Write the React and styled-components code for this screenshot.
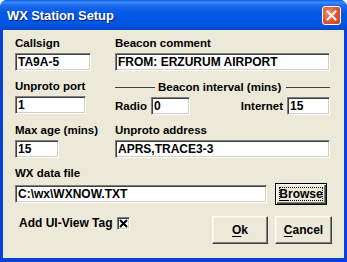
import React from "react";
import styled, { createGlobalStyle } from "styled-components";

const Global = createGlobalStyle`
    html, body {
        margin: 0;
        padding: 0;
        background: #ffffff;
    }
    body {
        font-family: "Liberation Sans", Arial, sans-serif;
    }
`;

const Window = styled.div`
    width: 347px;
    height: 262px;
    display: flex;
    flex-direction: column;
    box-sizing: border-box;
    background: #0842d6;
    border-radius: 7px 7px 0 0;
    overflow: hidden;
`;

const TitleBar = styled.div`
    height: 30px;
    flex: none;
    display: flex;
    align-items: center;
    justify-content: space-between;
    padding: 0 6px 0 7px;
    background: linear-gradient(
        to bottom,
        #0a5fe8 0%,
        #3d8cf5 8%,
        #1c69ee 18%,
        #0258e3 45%,
        #0056e4 75%,
        #0250da 90%,
        #0a46c4 100%
    );
`;

const Title = styled.span`
    color: #ffffff;
    font-weight: bold;
    font-size: 13px;
    text-shadow: 1px 1px #0a1f6c;
    letter-spacing: -0.1px;
`;

const CloseButton = styled.div`
    width: 19px;
    height: 19px;
    box-sizing: border-box;
    border: 1px solid #ffffff;
    border-radius: 3px;
    background: radial-gradient(circle at 35% 35%, #f08f6c 0%, #e0582f 50%, #c8401a 100%);
    display: flex;
    align-items: center;
    justify-content: center;
    margin-top: 1px;
`;

const Client = styled.div`
    flex: 1;
    min-height: 0;
    margin: 0 3px 4px 3px;
    background: #ece9d8;
    display: flex;
    flex-direction: column;
    padding: 7px 14px 0 12px;
    gap: 9px;
    font-size: 11.5px;
    font-weight: bold;
    color: #000000;
`;

const Row = styled.div`
    display: flex;
    gap: ${({ $gap }) => $gap ?? 24}px;
    align-items: ${({ $align }) => $align ?? "flex-start"};
    padding-right: ${({ $pr }) => $pr ?? 0}px;
    margin-top: ${({ $mt }) => $mt ?? 0}px;
`;

const Field = styled.div`
    display: flex;
    flex-direction: column;
    gap: 3px;
    width: ${({ $w }) => ($w ? `${$w}px` : "auto")};
    flex: ${({ $w }) => ($w ? "none" : 1)};
`;

const FileField = styled.div`
    display: flex;
    flex-direction: column;
    gap: 3px;
`;

const Label = styled.label`
    line-height: 13px;
    white-space: nowrap;
`;

const Input = styled.div`
    height: 18px;
    box-sizing: border-box;
    width: ${({ $w }) => ($w ? `${$w}px` : "auto")};
    flex: ${({ $grow }) => ($grow ? 1 : "none")};
    background: #ffffff;
    border: 1px solid;
    border-color: #808080 #ffffff #ffffff #808080;
    box-shadow: inset 1px 1px #404040, inset -1px -1px #d4d0c8;
    font-size: 12px;
    line-height: 16px;
    padding: 0 0 0 2px;
    white-space: nowrap;
    overflow: hidden;
`;

const Group = styled.div`
    flex: 1;
    display: flex;
    flex-direction: column;
    gap: 3px;
    padding-top: 1px;
`;

const Legend = styled.div`
    display: flex;
    align-items: center;
    gap: 3px;
    line-height: 13px;

    &::before,
    &::after {
        content: "";
        height: 0;
        border-top: 1px solid #404040;
    }
    &::before {
        width: 40px;
    }
    &::after {
        flex: 1;
        margin-left: 2px;
    }
`;

const Inline = styled.div`
    display: flex;
    align-items: center;
    gap: 4px;
`;

const Spacer = styled.div`
    flex: 1;
`;

const Button = styled.button`
    font-family: inherit;
    font-size: 12px;
    font-weight: bold;
    color: #000000;
    width: ${({ $w }) => $w}px;
    height: ${({ $h }) => $h}px;
    box-sizing: border-box;
    background: #ece9d8;
    border: 1px solid;
    border-color: #ffffff #404040 #404040 #ffffff;
    box-shadow: inset -1px -1px #808080, inset 1px 1px #f4f2e8;
    padding: 0;
    position: relative;

    u {
        text-decoration: underline;
        text-underline-offset: 2px;
    }
`;

const DefaultButton = styled(Button)`
    border: 1px solid #000000;
    box-shadow: inset 1px 1px #ffffff, inset -1px -1px #404040, inset -2px -2px #808080;

    &::after {
        content: "";
        position: absolute;
        inset: 3px;
        border: 1px dotted #000000;
    }
`;

const CheckRow = styled.div`
    display: flex;
    align-items: center;
    gap: 4px;
    padding-left: 4px;
    margin-top: 1px;
    font-size: 12px;
    line-height: 13px;
`;

const CheckBox = styled.div`
    width: 13px;
    height: 13px;
    box-sizing: border-box;
    background: #ffffff;
    border: 1px solid;
    border-color: #808080 #ffffff #ffffff #808080;
    box-shadow: inset 1px 1px #404040, inset -1px -1px #d4d0c8;
    display: flex;
    align-items: center;
    justify-content: center;
`;

const Buttons = styled.div`
    display: flex;
    gap: 7px;
    margin-left: auto;
    margin-right: -2px;
`;

export default function App() {
    return (
        <>
            <Global />
            <Window>
                <TitleBar>
                    <Title>WX Station Setup</Title>
                    <CloseButton>
                        <svg width="11" height="11" viewBox="0 0 11 11">
                            <path d="M1.5 1.5 L9.5 9.5 M9.5 1.5 L1.5 9.5" stroke="#ffffff" strokeWidth="2" strokeLinecap="square" />
                        </svg>
                    </CloseButton>
                </TitleBar>
                <Client>
                    <Row>
                        <Field $w={76}>
                            <Label>Callsign</Label>
                            <Input>TA9A-5</Input>
                        </Field>
                        <Field>
                            <Label>Beacon comment</Label>
                            <Input>FROM: ERZURUM AIRPORT</Input>
                        </Field>
                    </Row>
                    <Row>
                        <Field $w={76}>
                            <Label>Unproto port</Label>
                            <Input $w={71}>1</Input>
                        </Field>
                        <Group>
                            <Legend>Beacon interval (mins)</Legend>
                            <Inline>
                                <Label>Radio</Label>
                                <Input $w={39}>0</Input>
                                <Spacer />
                                <Label>Internet</Label>
                                <Input $w={43}>15</Input>
                            </Inline>
                        </Group>
                    </Row>
                    <Row>
                        <Field $w={76}>
                            <Label>Max age (mins)</Label>
                            <Input $w={44}>15</Input>
                        </Field>
                        <Field>
                            <Label>Unproto address</Label>
                            <Input>APRS,TRACE3-3</Input>
                        </Field>
                    </Row>
                    <FileField>
                        <Label>WX data file</Label>
                        <Row $gap={8} $align="center" $pr={3}>
                            <Input $grow>C:\wx\WXNOW.TXT</Input>
                            <DefaultButton $w={52} $h={22}>
                                <u>B</u>rowse
                            </DefaultButton>
                        </Row>
                    </FileField>
                    <Row $align="flex-start" $mt={2}>
                        <CheckRow>
                            <span>Add UI-View Tag</span>
                            <CheckBox>
                                <svg width="9" height="9" viewBox="0 0 9 9">
                                    <path d="M1 1 L8 8 M8 1 L1 8" stroke="#000000" strokeWidth="2" />
                                </svg>
                            </CheckBox>
                        </CheckRow>
                        <Buttons>
                            <Button $w={56} $h={28}>
                                <u>O</u>k
                            </Button>
                            <Button $w={57} $h={28}>
                                <u>C</u>ancel
                            </Button>
                        </Buttons>
                    </Row>
                </Client>
            </Window>
        </>
    );
}
